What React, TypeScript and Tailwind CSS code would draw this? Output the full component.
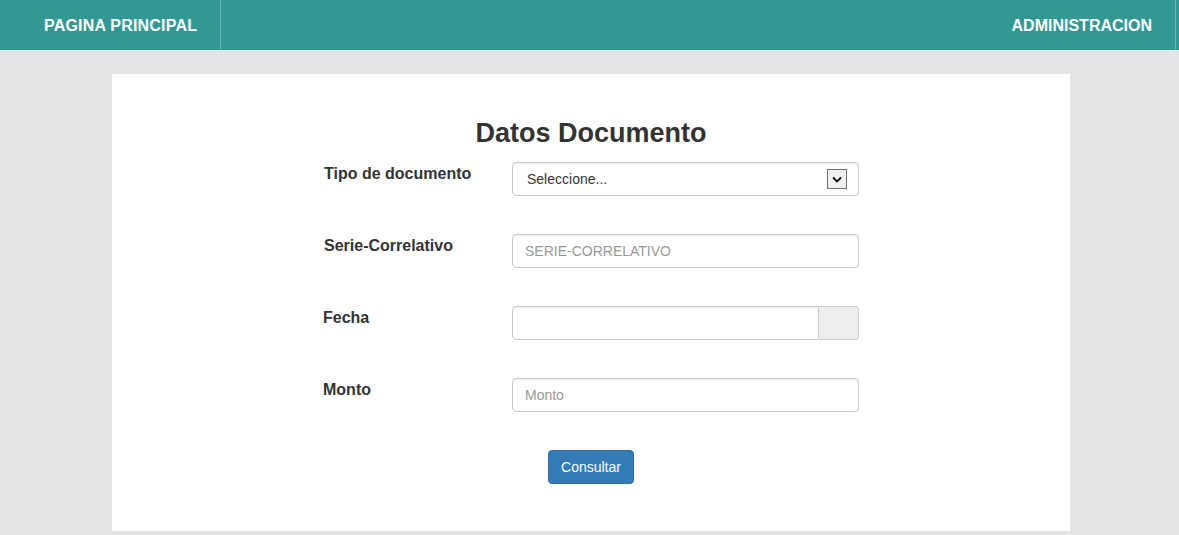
import React from 'react';

const font = { fontFamily: '"Liberation Sans", Arial, Helvetica, sans-serif' };

function SelectArrow() {
  // old-style native dropdown button
  return (
    <span className="flex h-[20px] w-[20px] items-center justify-center border border-[#707070] bg-[#f0f0f0]">
      <svg width="10" height="7" viewBox="0 0 10 7" fill="none">
        <path d="M1 1.5 L5 5.5 L9 1.5" stroke="#111" strokeWidth="1.8" />
      </svg>
    </span>
  );
}

function FormRow({ label, children, tight }: { label: string; children: React.ReactNode; tight?: boolean }) {
  return (
    <div className="flex items-start">
      <label className={tight ? 'w-[189px] pt-[2px] text-[16px] font-bold leading-[20px] text-[#333]' : 'w-[189px] pl-px pt-[2px] text-[16px] font-bold leading-[20px] text-[#333]'}>
        {label}
      </label>
      <div className="w-[347px]">{children}</div>
    </div>
  );
}

const inputCls =
  'h-[34px] w-full rounded border border-[#ccc] bg-white px-3 text-[14px] text-[#555] shadow-[inset_0_1px_1px_rgba(0,0,0,0.075)] outline-none placeholder:text-[#999]';

export default function App() {
  return (
    <div className="min-h-[535px] bg-[#e5e5e5]" style={font}>
      {/* Top nav */}
      <nav className="flex h-[50px] items-stretch justify-between bg-[#339893]">
        <a className="flex w-[221px] items-center border-r border-[#6fb7b2] pl-[44px] pt-[2px] text-[16px] font-bold tracking-[0.2px] text-white">
          PAGINA PRINCIPAL
        </a>
        <a className="mr-[3px] flex items-center border-r border-[#6fb7b2] pl-[20px] pr-[23px] pt-[2px] text-[16px] font-bold text-white">
          ADMINISTRACION
        </a>
      </nav>

      {/* Panel */}
      <div className="ml-[112px] mt-[24px] w-[958px] bg-white pt-[44px] pb-[47px]">
        <h1 className="text-center text-[27px] font-bold leading-[30px] text-[#333]">Datos Documento</h1>

        <div className="mx-auto mt-[14px] flex w-[536px] flex-col gap-[38px]">
          <FormRow label="Tipo de documento">
            <div className="flex h-[34px] items-center justify-between rounded border border-[#ccc] bg-white pl-[14px] pr-[11px] text-[14px] text-[#333] shadow-[inset_0_1px_1px_rgba(0,0,0,0.075)]">
              <span>Seleccione...</span>
              <SelectArrow />
            </div>
          </FormRow>

          <FormRow label="Serie-Correlativo">
            <input className={inputCls} placeholder="SERIE-CORRELATIVO" style={font} />
          </FormRow>

          <FormRow label="Fecha" tight>
            <div className="flex h-[34px] w-full">
              <input className="h-[34px] flex-1 rounded-l border border-[#ccc] bg-white px-3 text-[14px] shadow-[inset_0_1px_1px_rgba(0,0,0,0.075)] outline-none" style={font} />
              <span className="h-[34px] w-[40px] rounded-r border border-l-0 border-[#ccc] bg-[#eee]" />
            </div>
          </FormRow>

          <FormRow label="Monto" tight>
            <input className={inputCls} placeholder="Monto" style={font} />
          </FormRow>
        </div>

        <div className="mt-[38px] flex justify-center">
          <button className="h-[34px] w-[86px] rounded border border-[#2e6da4] bg-[#337ab7] text-[14px] text-white" style={font}>
            Consultar
          </button>
        </div>
      </div>
    </div>
  );
}
